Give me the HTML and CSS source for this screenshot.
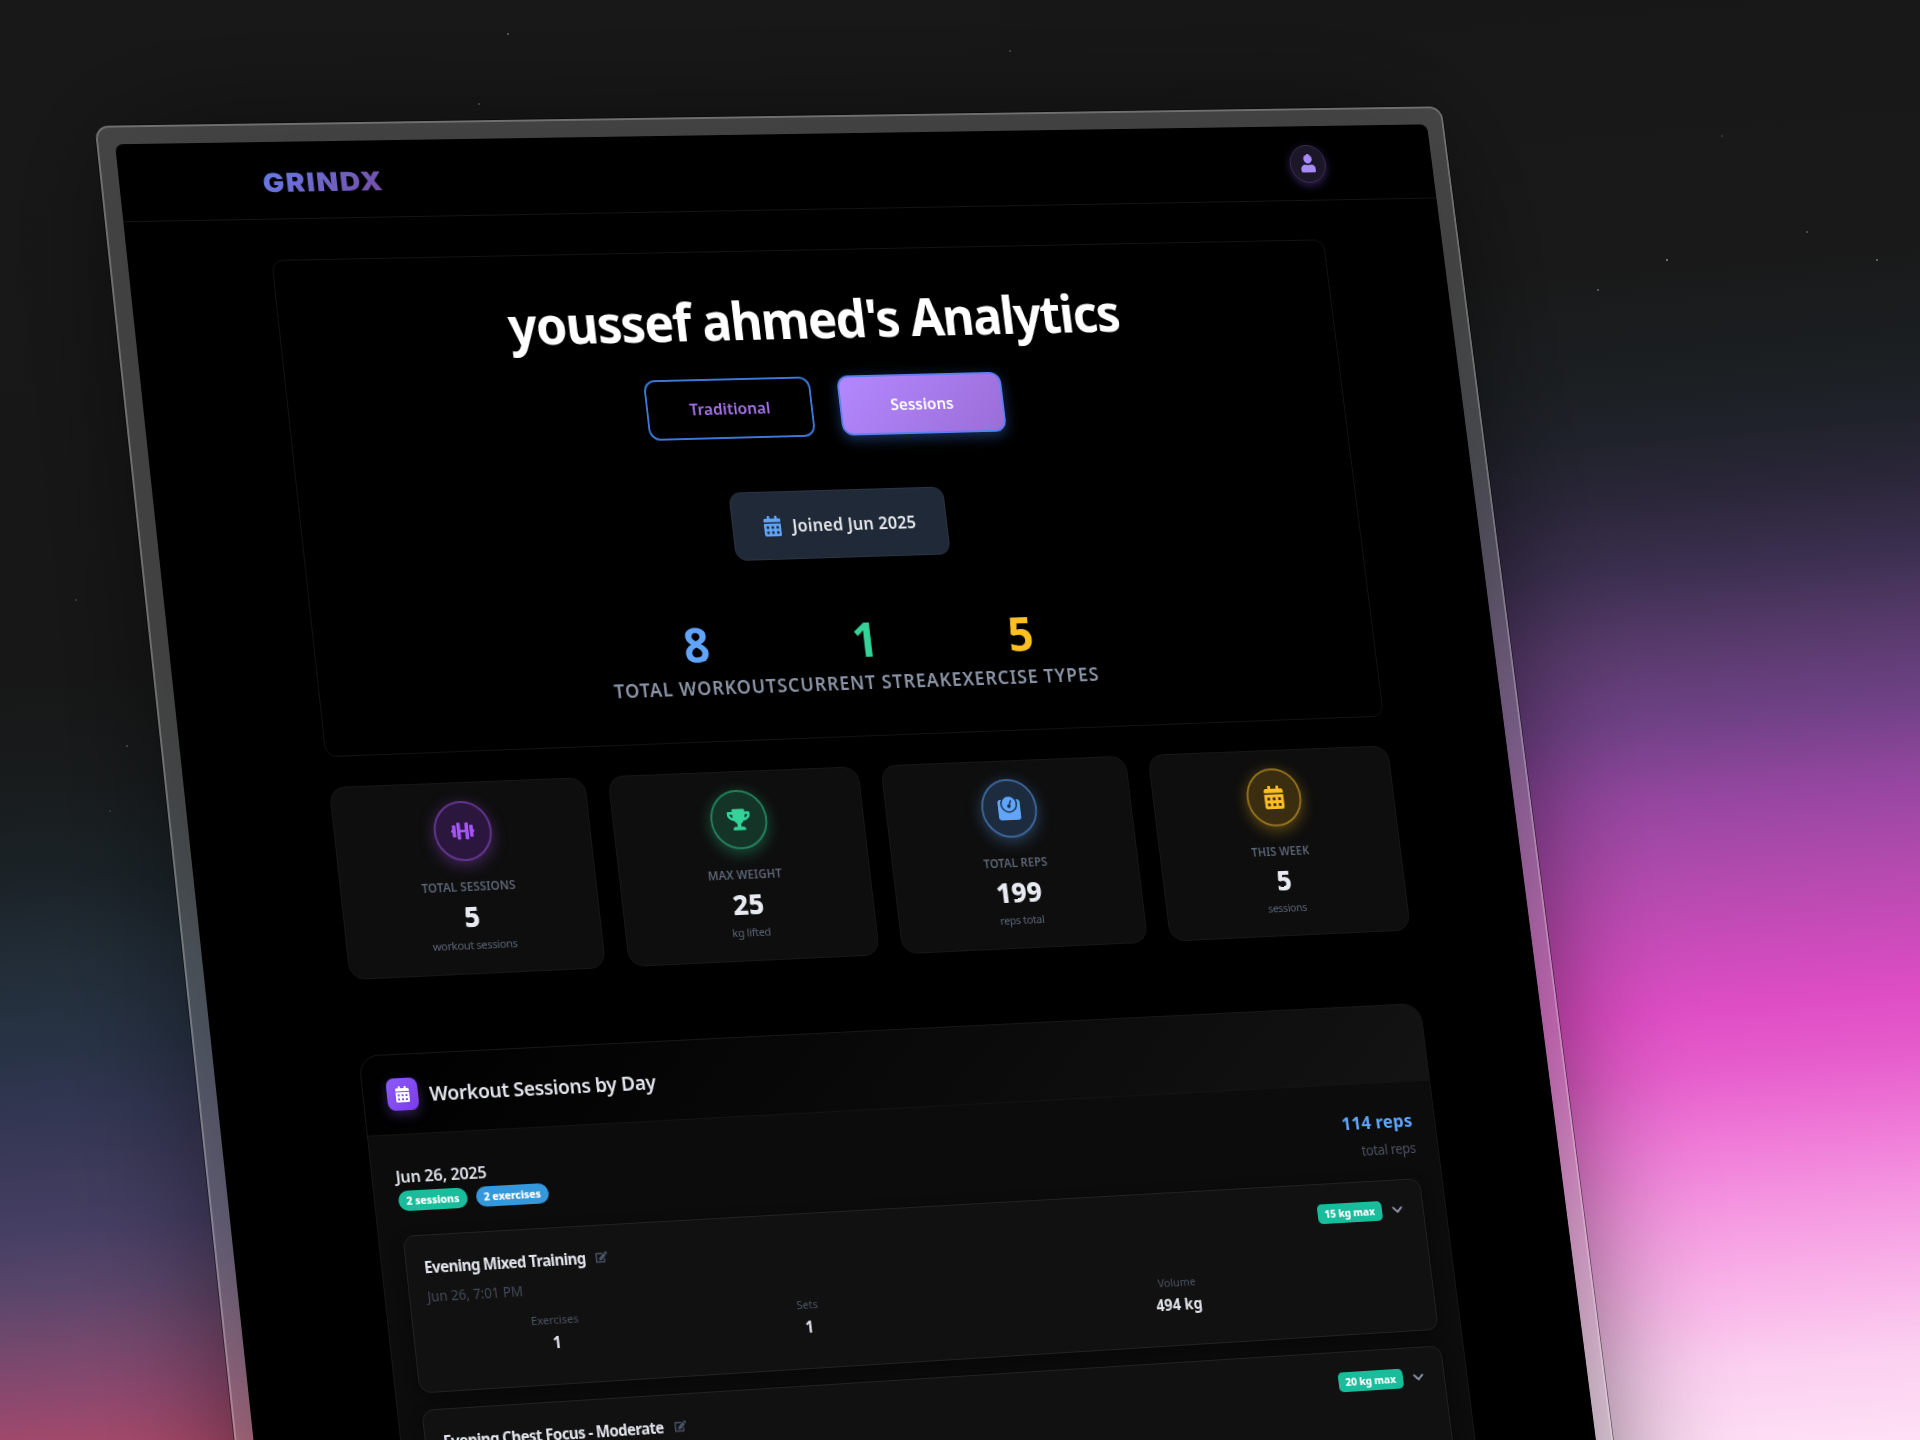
FILE: index.html
```html
<!DOCTYPE html>
<html lang="en">
<head>
<meta charset="utf-8">
<title>GrindX Analytics</title>
<link rel="stylesheet" href="styles.css">
</head>
<body>
<svg class="sprite" aria-hidden="true">
  <symbol id="i-calendar" viewBox="0 0 448 512"><path fill-rule="evenodd" d="M0 464c0 26.500 21.500 48 48 48h352c26.500 0 48-21.500 48-48V192H0zM64 268a12 12 0 0 1 12-12h40a12 12 0 0 1 12 12v40a12 12 0 0 1-12 12H76a12 12 0 0 1-12-12zM192 268a12 12 0 0 1 12-12h40a12 12 0 0 1 12 12v40a12 12 0 0 1-12 12h-40a12 12 0 0 1-12-12zM320 268a12 12 0 0 1 12-12h40a12 12 0 0 1 12 12v40a12 12 0 0 1-12 12h-40a12 12 0 0 1-12-12zM64 396a12 12 0 0 1 12-12h40a12 12 0 0 1 12 12v40a12 12 0 0 1-12 12H76a12 12 0 0 1-12-12zM192 396a12 12 0 0 1 12-12h40a12 12 0 0 1 12 12v40a12 12 0 0 1-12 12h-40a12 12 0 0 1-12-12zM320 396a12 12 0 0 1 12-12h40a12 12 0 0 1 12 12v40a12 12 0 0 1-12 12h-40a12 12 0 0 1-12-12zM400 64h-48V16c0-8.800-7.200-16-16-16h-32c-8.800 0-16 7.200-16 16v48H160V16c0-8.800-7.200-16-16-16h-32c-8.800 0-16 7.200-16 16v48H48C21.500 64 0 85.500 0 112v48h448v-48c0-26.500-21.500-48-48-48z"/></symbol>
  <symbol id="i-dumbbell" viewBox="0 0 640 512"><path d="M104 96H56c-13.300 0-24 10.700-24 24v104H8c-4.400 0-8 3.600-8 8v48c0 4.400 3.600 8 8 8h24v104c0 13.300 10.700 24 24 24h48c13.300 0 24-10.700 24-24V120c0-13.300-10.700-24-24-24zm528 128h-24V120c0-13.300-10.700-24-24-24h-48c-13.300 0-24 10.700-24 24v272c0 13.300 10.700 24 24 24h48c13.300 0 24-10.700 24-24V288h24c4.400 0 8-3.600 8-8v-48c0-4.400-3.600-8-8-8zM456 32h-48c-13.300 0-24 10.700-24 24v168H256V56c0-13.300-10.700-24-24-24h-48c-13.300 0-24 10.700-24 24v400c0 13.300 10.700 24 24 24h48c13.300 0 24-10.700 24-24V288h128v168c0 13.300 10.700 24 24 24h48c13.300 0 24-10.700 24-24V56c0-13.300-10.700-24-24-24z"/></symbol>
  <symbol id="i-trophy" viewBox="0 0 576 512"><path d="M552 64H448V24c0-13.300-10.700-24-24-24H152c-13.300 0-24 10.700-24 24v40H24C10.700 64 0 74.700 0 88v56c0 35.700 22.500 72.400 61.900 100.700 31.500 22.700 69.800 37.100 110 41.700C203.300 338.500 240 360 240 360v72h-48c-35.300 0-64 20.700-64 56v12c0 6.600 5.400 12 12 12h296c6.600 0 12-5.400 12-12v-12c0-35.300-28.700-56-64-56h-48v-72s36.700-21.500 68.100-73.600c40.300-4.600 78.600-19 110-41.700 39.300-28.300 61.900-65 61.900-100.700V88c0-13.300-10.700-24-24-24zM99.300 192.800C74.900 175.200 64 155.600 64 144v-16h64.200c1 32.600 5.800 61.200 12.800 86.200-15.100-5.200-29.200-12.400-41.700-21.400zM512 144c0 16.100-17.700 36.100-35.300 48.800-12.500 9-26.700 16.200-41.800 21.400 7-25 11.800-53.600 12.800-86.200H512z"/></symbol>
  <symbol id="i-weight" viewBox="0 0 512 512"><path d="M448 64h-25.980C438.440 92.280 448 125.010 448 160c0 105.870-86.130 192-192 192S64 265.870 64 160c0-34.990 9.560-67.720 25.980-96H64C28.710 64 0 92.710 0 128v320c0 35.290 28.710 64 64 64h384c35.290 0 64-28.710 64-64V128c0-35.290-28.710-64-64-64zM256 320c88.370 0 160-71.630 160-160S344.370 0 256 0 96 71.630 96 160s71.630 160 160 160zm-.3-151.940l33.580-78.360c3.500-8.170 12.940-11.920 21.030-8.410 8.120 3.480 11.880 12.890 8.410 21l-33.670 78.550C291.730 188 296 197.450 296 208c0 22.090-17.910 40-40 40s-40-17.910-40-40c0-21.980 17.760-39.770 39.700-39.940z"/></symbol>
  <symbol id="i-user" viewBox="0 0 448 512"><path d="M224 256c70.700 0 128-57.300 128-128S294.700 0 224 0 96 57.300 96 128s57.300 128 128 128zm89.600 32h-16.700c-22.200 10.200-46.900 16-72.900 16s-50.600-5.800-72.900-16h-16.700C60.200 288 0 348.200 0 422.400V464c0 26.500 21.500 48 48 48h352c26.500 0 48-21.500 48-48v-41.600c0-74.200-60.200-134.400-134.400-134.400z"/></symbol>
  <symbol id="i-edit" viewBox="0 0 576 512"><path d="M402.600 83.200l90.200 90.200c3.800 3.800 3.800 10 0 13.800L274.400 405.600l-92.800 10.300c-12.400 1.400-22.900-9.100-21.500-21.500l10.300-92.800L388.800 83.200c3.800-3.800 10-3.800 13.800 0zm162-22.900l-48.800-48.800c-15.200-15.200-39.900-15.200-55.200 0l-35.400 35.400c-3.800 3.800-3.800 10 0 13.800l90.200 90.200c3.800 3.800 10 3.800 13.800 0l35.400-35.400c15.200-15.300 15.200-40 0-55.200zM384 346.200V448H64V128h229.800c3.200 0 6.200-1.300 8.500-3.500l40-40c7.600-7.600 2.200-20.500-8.500-20.500H48C21.500 64 0 85.500 0 112v352c0 26.500 21.500 48 48 48h352c26.500 0 48-21.500 48-48V306.200c0-10.700-12.900-16-20.500-8.500l-40 40c-2.200 2.300-3.500 5.300-3.500 8.500z"/></symbol>
  <symbol id="i-chevron" viewBox="0 0 12 8"><path d="M1.500 1.500 6 6l4.500-4.500" fill="none" stroke="currentColor" stroke-width="2" stroke-linecap="round" stroke-linejoin="round"/></symbol>
</svg>

<div class="sky">
  <div class="sky-left"></div>
  <div class="sky-right"></div>
  <div class="stars"></div>
</div>

<div class="device">
  <div class="screen">
    <header class="topbar">
      <span class="logo">GRINDX</span>
      <span class="avatar"><svg><use href="#i-user"/></svg></span>
    </header>

    <main class="container">
      <section class="hero">
        <h1>youssef ahmed's Analytics</h1>
        <div class="tabs">
          <button class="tab">Traditional</button>
          <button class="tab active">Sessions</button>
        </div>
        <div class="joined"><svg><use href="#i-calendar"/></svg><span>Joined Jun 2025</span></div>
        <div class="totals">
          <div class="total blue"><b>8</b><span>TOTAL WORKOUTS</span></div>
          <div class="total green"><b>1</b><span>CURRENT STREAK</span></div>
          <div class="total amber"><b>5</b><span>EXERCISE TYPES</span></div>
        </div>
      </section>

      <section class="cards">
        <article class="card purple"><span class="ring"><svg><use href="#i-dumbbell"/></svg></span><h3>TOTAL SESSIONS</h3><strong>5</strong><small>workout sessions</small></article>
        <article class="card green"><span class="ring"><svg><use href="#i-trophy"/></svg></span><h3>MAX WEIGHT</h3><strong>25</strong><small>kg lifted</small></article>
        <article class="card blue"><span class="ring"><svg><use href="#i-weight"/></svg></span><h3>TOTAL REPS</h3><strong>199</strong><small>reps total</small></article>
        <article class="card amber"><span class="ring"><svg><use href="#i-calendar"/></svg></span><h3>THIS WEEK</h3><strong>5</strong><small>sessions</small></article>
      </section>

      <section class="panel">
        <div class="panel-head">
          <span class="panel-icon"><svg><use href="#i-calendar"/></svg></span>
          <h2>Workout Sessions by Day</h2>
        </div>
        <div class="panel-body">
          <div class="day">
            <div class="day-info">
              <h4>Jun 26, 2025</h4>
              <div class="pills"><span class="pill teal">2 sessions</span><span class="pill sky-blue">2 exercises</span></div>
            </div>
            <div class="day-total"><b>114 reps</b><span class="muted">total reps</span></div>
          </div>

          <article class="session">
            <div class="session-head">
              <div class="session-title"><span>Evening Mixed Training</span><svg><use href="#i-edit"/></svg></div>
              <div class="session-side"><span class="badge">15 kg max</span><svg><use href="#i-chevron"/></svg></div>
            </div>
            <p class="when">Jun 26, 7:01 PM</p>
            <dl class="metrics">
              <div><dt>Exercises</dt><dd>1</dd></div>
              <div><dt>Sets</dt><dd>1</dd></div>
              <div class="wide"><dt>Volume</dt><dd>494 kg</dd></div>
            </dl>
          </article>

          <article class="session">
            <div class="session-head">
              <div class="session-title"><span>Evening Chest Focus - Moderate</span><svg><use href="#i-edit"/></svg></div>
              <div class="session-side"><span class="badge">20 kg max</span><svg><use href="#i-chevron"/></svg></div>
            </div>
          </article>
        </div>
      </section>
    </main>
  </div>
</div>
</body>
</html>
```
FILE: styles.css
```css
* { box-sizing: border-box; }

html { height: 1440px; overflow: hidden; }
body {
  position: relative;
  margin: 0;
  width: 1920px;
  height: 1440px;
  overflow: hidden;
  background: #171717;
  font-family: "Noto Sans", "Open Sans", sans-serif;
  color: #e5e7eb;
}

h1, h2, h3, h4, p, dl, dd { margin: 0; }
svg { display: block; fill: currentColor; }
.sprite { display: none; }

/* Backdrop */
.sky {
  position: absolute;
  inset: 0;
  display: flex;
  overflow: hidden;
}
.sky-left {
  width: 1000px;
  background: linear-gradient(175deg, #181818 0, #171717 680px, #181c1d 790px, #1b2328 880px, #222d38 965px, #283346 1050px, #323652 1110px, #3c3a5a 1170px, #463f64 1230px, #5a456a 1290px, #72486d 1340px, #8e486e 1400px, #b24a68 1475px);
}
.sky-right {
  width: 920px;
  background: linear-gradient(175deg, #171717 0, #191919 318px, #1b1f22 433px, #1f222a 488px, #2a2638 550px, #3b2f4f 625px, #573a6b 700px, #6e4185 775px, #94469f 853px, #b04aad 930px, #ca4bba 1005px, #df4dc5 1068px, #e65dcc 1128px, #ef79d7 1197px, #f598e1 1273px, #f9b4e8 1350px, #fbcff0 1425px, #fee0f5 1515px);
}
.stars {
  position: absolute;
  inset: 0;
  background:
    radial-gradient(circle at 508px 34px, #8a8a8a 0, transparent 1.500px),
    radial-gradient(circle at 479px 104px, #777 0, transparent 1.500px),
    radial-gradient(circle at 1010px 51px, #666 0, transparent 1.500px),
    radial-gradient(circle at 1667px 260px, #bbb 0, transparent 1.500px),
    radial-gradient(circle at 1877px 260px, #999 0, transparent 1.500px),
    radial-gradient(circle at 1598px 290px, #888 0, transparent 1.500px),
    radial-gradient(circle at 1807px 232px, #777 0, transparent 1.500px),
    radial-gradient(circle at 1722px 136px, #444 0, transparent 1.500px),
    radial-gradient(circle at 76px 600px, #555 0, transparent 1.500px),
    radial-gradient(circle at 127px 746px, #777 0, transparent 1.500px),
    radial-gradient(circle at 110px 811px, #555 0, transparent 1.500px);
}

/* Tilted device */
.device {
  position: relative;
  width: 1455px;
  height: 1700px;
  padding: 19px;
  transform-origin: 0 0;
  transform: matrix3d(0.974507, -0.009507, 0, 0.000036338, 0.103108, 0.980201, 0, -0.000016153, 0, 0, 1, 0, 94.173, 125.350, 0, 0.996185);
}
.device::before {
  content: "";
  position: absolute;
  z-index: -1;
  inset: 19px;
  border-radius: 8px;
  box-shadow: 0 0 150px rgba(0, 0, 0, .6);
}
.device::after {
  content: "";
  position: absolute;
  z-index: -1;
  inset: 0;
  border: 2px solid rgba(255, 255, 255, .24);
  border-radius: 14px;
  background: rgba(255, 255, 255, .2);
  box-shadow: 0 0 0 1px rgba(0, 0, 0, .4);
}
.screen {
  width: 1417px;
  height: 100%;
  border-radius: 8px;
  overflow: hidden;
  background: #000;
}

.topbar {
  display: flex;
  align-items: center;
  justify-content: space-between;
  height: 79px;
  padding: 0 120px 0 148px;
  border-bottom: 1px solid #141414;
}
.logo {
  margin-top: 4px;
  font: 900 26.500px/40px Inter, "Liberation Sans", sans-serif;
  letter-spacing: 1.600px;
  background: linear-gradient(135deg, #667eea, #764ba2);
  -webkit-background-clip: text;
  background-clip: text;
  color: transparent;
  transform: scaleX(1.110);
  transform-origin: 0 50%;
}
.avatar {
  display: grid;
  place-items: center;
  width: 40px;
  height: 40px;
  margin-top: 1px;
  border: 1px solid #3a3152;
  border-radius: 50%;
  background: #1b1628;
  box-shadow: 0 3px 10px rgba(139, 92, 246, .35);
  color: #a78bfa;
}
.avatar svg { width: 16.500px; height: 19px; }

.container {
  width: 1136px;
  margin: 41.200px 0 0 147.700px;
}

/* Hero */
.hero {
  display: flex;
  flex-direction: column;
  align-items: center;
  height: 501px;
  padding-top: 40px;
  border: 1px solid #131313;
  border-radius: 12px;
}
.hero h1 {
  padding-left: 2px;
  font-size: 53px;
  line-height: 62px;
  font-weight: 700;
  letter-spacing: -1.440px;
  color: #fff;
}
.tabs {
  display: flex;
  gap: 29px;
  margin-top: 28px;
}
.tab {
  width: 178px;
  height: 62px;
  padding: 0;
  border: 2px solid #3b78d8;
  border-radius: 12px;
  background: #000;
  font: 600 16.500px/24px "Noto Sans", sans-serif;
  color: #a472e6;
}
.tab.active {
  border-color: #5b7ff0;
  background: linear-gradient(135deg, #b388ff, #9b6dd8);
  box-shadow: 0 4px 14px rgba(59, 130, 246, .4);
  color: #fff;
}
.joined {
  display: flex;
  align-items: center;
  justify-content: center;
  gap: 12px;
  width: 231px;
  height: 70px;
  margin-top: 55px;
  border: 1px solid #2b3442;
  border-radius: 12px;
  background: #1f2937;
  font-size: 17.500px;
  font-weight: 600;
  letter-spacing: .200px;
  color: #e5e7eb;
}
.joined svg { width: 18.400px; height: 21px; color: #60a5fa; }
.totals {
  display: flex;
  margin-top: 60px;
}
.total {
  display: flex;
  flex-direction: column;
  align-items: center;
}
.total b { font-size: 48px; line-height: 48px; font-weight: 700; }
.total span {
  margin-top: 7px;
  font-size: 19px;
  line-height: 26px;
  font-weight: 600;
  letter-spacing: 1.050px;
  color: #8a93a5;
}
.total.blue b { color: #60a5fa; }
.total.green b { color: #34d399; }
.total.amber b { color: #fbbf24; }

/* Summary cards */
.cards {
  display: grid;
  grid-template-columns: repeat(4, 1fr);
  gap: 24px;
  margin-top: 29.500px;
}
.card {
  display: flex;
  flex-direction: column;
  align-items: center;
  height: 192px;
  padding-top: 18px;
  border: 1px solid #171717;
  border-radius: 16px;
  background: #0e0e0e;
}
.ring {
  display: grid;
  place-items: center;
  width: 60px;
  height: 60px;
  border: 2px solid;
  border-radius: 50%;
}
.ring svg { width: 24px; height: 24px; }
.card.purple .ring { background: #2b173e; border-color: #64358f; color: #a855f7; box-shadow: 0 4px 16px rgba(168, 85, 247, .35); }
.card.green .ring { background: #143428; border-color: #23805d; color: #34d399; box-shadow: 0 4px 16px rgba(52, 211, 153, .35); }
.card.blue .ring { background: #1d2b3f; border-color: #3c6699; color: #60a5fa; box-shadow: 0 4px 16px rgba(96, 165, 250, .35); }
.card.amber .ring { background: #3a2d10; border-color: #94721d; color: #fbbf24; box-shadow: 0 4px 16px rgba(251, 191, 36, .35); }
.card h3 {
  margin-top: 17px;
  font-size: 12px;
  line-height: 18px;
  font-weight: 600;
  letter-spacing: .120px;
  color: #5c6576;
}
.card strong {
  margin-top: 3px;
  font-size: 28.500px;
  line-height: 34px;
  font-weight: 800;
  color: #e8eaf2;
}
.card small {
  margin-top: 4px;
  font-size: 11.500px;
  line-height: 16px;
  letter-spacing: -.350px;
  color: #5b6576;
}

/* Sessions panel */
.panel {
  height: 900px;
  margin-top: 75.500px;
  border: 1px solid #171717;
  border-radius: 20px;
  background: #0c0c0c;
  overflow: hidden;
}
.panel-head {
  display: flex;
  align-items: center;
  gap: 12px;
  height: 79px;
  padding: 0 24px;
  border-bottom: 1px solid #131313;
  background: linear-gradient(135deg, #000, #131313);
}
.panel-icon {
  display: grid;
  place-items: center;
  width: 32px;
  height: 32px;
  border-radius: 8px;
  background: linear-gradient(135deg, #8b5cf6, #7c3aed);
  box-shadow: 0 4px 12px rgba(139, 92, 246, .35);
  color: #fff;
}
.panel-icon svg { width: 14px; height: 16px; }
.panel-head h2 {
  padding-top: 1px;
  font-size: 20px;
  line-height: 28px;
  font-weight: 600;
  letter-spacing: -.370px;
  color: #e2e4ec;
}
.panel-body { padding: 0 24px; }
.day {
  display: flex;
  justify-content: space-between;
  height: 99px;
  padding-top: 26px;
}
.day-info { padding-top: 3px; }
.day-info h4 {
  font-size: 16.500px;
  line-height: 24px;
  font-weight: 600;
  letter-spacing: -.200px;
  color: #dfe2ea;
}
.pills {
  display: flex;
  gap: 9px;
  margin-top: 2px;
}
.pill, .badge {
  display: inline-flex;
  align-items: center;
  justify-content: center;
  height: 20px;
  border-radius: 10px;
  font-size: 11px;
  line-height: 20px;
  font-weight: 800;
  letter-spacing: -.140px;
  color: #fff;
}
.pill.teal { width: 71px; background: #1abc9c; }
.pill.sky-blue { width: 75px; background: #3498db; }
.day-total {
  display: flex;
  flex-direction: column;
  align-items: flex-end;
}
.day-total b { font-size: 18.500px; line-height: 26px; letter-spacing: .200px; color: #60a5fa; }
.muted { margin-top: 6px; font-size: 14px; line-height: 20px; letter-spacing: -.240px; color: #4b5260; }

.session {
  height: 155px;
  margin-bottom: 16px;
  padding: 19px 17px 0 18px;
  border: 1px solid #222;
  border-radius: 12px;
  background: #111;
  box-shadow: 0 4px 14px rgba(0, 0, 0, .45);
}
.session-head {
  display: flex;
  justify-content: space-between;
  height: 22px;
}
.session-title {
  display: flex;
  align-items: center;
  gap: 11px;
  padding-top: 2px;
  font-size: 15.500px;
  line-height: 22px;
  font-weight: 700;
  letter-spacing: -.590px;
  color: #e2e4ec;
}
.session-title svg { width: 12.500px; height: 12px; color: #4a5568; }
.session-side {
  display: flex;
  align-items: center;
  gap: 11px;
}
.badge { width: 71px; border-radius: 5px; background: #1abc9c; }
.session-side svg { width: 12px; height: 8px; margin-right: 5px; color: #8b93a5; }
.when { margin-top: 9px; font-size: 13.700px; line-height: 20px; color: #434b59; }
.metrics {
  display: grid;
  grid-template-columns: repeat(4, 256px);
  gap: 8px;
  margin-top: 12px;
  text-align: center;
}
.metrics .wide { grid-column: span 2; }
.metrics dt { font-size: 11.500px; line-height: 16px; color: #4b5464; }
.metrics dd { margin-top: 3px; font-size: 15.500px; line-height: 22px; font-weight: 700; color: #e2e4ec; }
```
